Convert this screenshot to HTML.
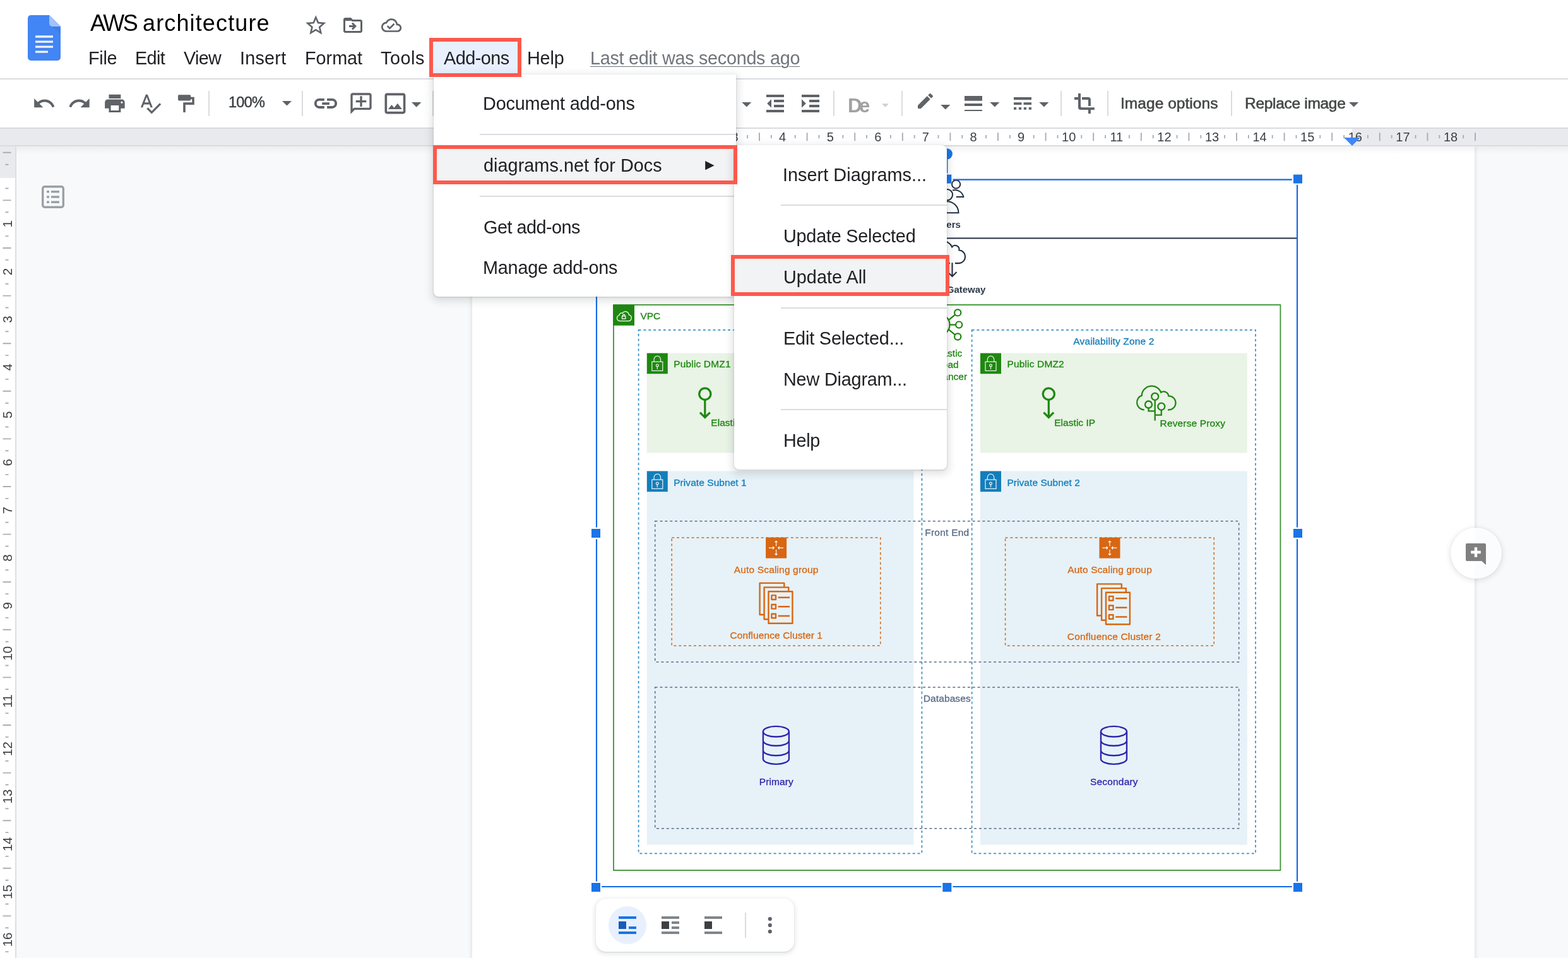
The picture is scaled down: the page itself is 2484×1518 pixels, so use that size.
<!DOCTYPE html>
<html lang="en"><head><meta charset="utf-8"><title>AWS architecture - Google Docs</title>
<style>
html,body{margin:0;padding:0}
body{width:2484px;height:1518px;position:relative;overflow:hidden;background:#f8f9fa;
font-family:"Liberation Sans",sans-serif;}
.t{position:absolute;white-space:nowrap;line-height:1;will-change:transform;}
.ic{position:absolute;display:block;will-change:transform;}
</style></head>
<body>
<!-- document canvas -->
<div style="position:absolute;left:748px;top:232px;width:1588px;height:1300px;background:#fff;box-shadow:0 0 6px 1px rgba(60,64,67,.15);"></div>
<div style="position:absolute;left:25px;top:232px;width:2459px;height:12px;background:linear-gradient(rgba(60,64,67,.06),rgba(60,64,67,0));"></div>
<svg class="ic" style="left:65.8px;top:294px" width="36" height="36" viewBox="0 0 36 36"><rect x="1.7" y="1.7" width="32.6" height="32.6" rx="3" fill="none" stroke="#9aa0a6" stroke-width="3.4"/><path d="M8 8h4v3.6H8zM15 8h13v3.6H15zM8 16.2h4v3.6H8zM15 16.2h13v3.6H15zM8 24.4h4V28H8zM15 24.4h13V28H15z" fill="#9aa0a6"/></svg>
<!-- embedded diagram -->
<svg class="ic" style="left:900px;top:270px;overflow:visible" width="1200" height="1150" viewBox="900 270 1200 1150" font-family="Liberation Sans, sans-serif">
<path d="M946 377.5H2054" stroke="#232f3e" stroke-width="2"/>
<g fill="none" stroke="#232f3e" stroke-width="2"><circle cx="1514.600" cy="292" r="6.600"/><path d="M1509 301.500a14 14 0 0 1 17.300 10.400h-11.500"/><circle cx="1500.500" cy="308.600" r="8.600"/><path d="M1482.500 337.300a18 18 0 0 1 36 0z"/></g>
<text x="1501.0" y="361.3" fill="#2d3848" stroke="#2d3848" stroke-width="0" font-size="15" text-anchor="middle" font-weight="bold">Users</text>
<g fill="none" stroke="#232f3e" stroke-width="2.1"><path d="M1480 417.100h8M1497 417.100h8M1512.900 417.100h7A10.400 10.400 0 0 0 1519.400 396.400A6.300 6.300 0 0 0 1508.200 391.400A16 16 0 0 0 1478 394A12 12 0 0 0 1480 417.100"/><path d="M1508.500 416.300v20.500M1501.500 431l7 7 7-7M1492.500 438v-21M1485.500 423.500l7-7 7 7"/></g>
<text x="1501.0" y="463.5" fill="#2d3848" stroke="#2d3848" stroke-width="0" font-size="15" text-anchor="middle" font-weight="bold">Internet Gateway</text>
<rect x="972" y="483.100" width="1056.400" height="895.900" fill="none" stroke="#3a9430" stroke-width="1.8"/>
<g transform="translate(971.2 482.9)"><rect width="33.800" height="32.900" fill="#1f8711"/><g fill="none" stroke="#fff" stroke-width="1.25"><path d="M9.800 25.700h14.500a4.900 4.900 0 0 0 .8-9.700a5.600 5.600 0 0 0-10.300-2.600a3.600 3.600 0 0 0-5 3.200a4.700 4.700 0 0 0 0 9.100z"/><rect x="14.300" y="18" width="5.400" height="4.300"/><path d="M15.400 18v-1.100a1.600 1.600 0 0 1 3.200 0v1.100"/></g></g>
<text x="1014.4" y="506.0" fill="#1f8711" stroke="#1f8711" stroke-width=".3" font-size="15.5">VPC</text>
<g fill="none" stroke="#1f8711" stroke-width="2.2"><circle cx="1487.800" cy="514.600" r="16.700"/><circle cx="1517.200" cy="495.400" r="5.100"/><circle cx="1519.200" cy="514.600" r="5.100"/><circle cx="1517.200" cy="533.500" r="5.100"/><path d="M1502.500 507.400l10.300-8.600M1504.500 514.600h9.600M1502.500 521.800l10.300 8.500"/></g>
<text x="1501.5" y="564.8" fill="#1f8711" stroke="#1f8711" stroke-width=".3" font-size="15.5" text-anchor="middle">Elastic</text>
<text x="1501.5" y="583.4" fill="#1f8711" stroke="#1f8711" stroke-width=".3" font-size="15.5" text-anchor="middle">Load</text>
<text x="1501.5" y="602.0" fill="#1f8711" stroke="#1f8711" stroke-width=".3" font-size="15.5" text-anchor="middle">Balancer</text>
<rect x="1011.6" y="522.8" width="448.8" height="829.5" fill="none" stroke="#3a90c6" stroke-width="1.75" stroke-dasharray="3.93 3.93"/>
<rect x="1539.6" y="522.8" width="449.4" height="829.5" fill="none" stroke="#3a90c6" stroke-width="1.75" stroke-dasharray="3.93 3.93"/>
<text x="1236.0" y="545.8" fill="#147eba" stroke="#147eba" stroke-width=".3" font-size="15.5" text-anchor="middle">Availability Zone 1</text>
<text x="1764.3" y="545.8" fill="#147eba" stroke="#147eba" stroke-width=".3" font-size="15.5" text-anchor="middle" textLength="128.0" lengthAdjust="spacing">Availability Zone 2</text>
<rect x="1024.8" y="559.6" width="422.8" height="157.9" fill="#e9f3e6"/>
<g transform="translate(1024.8 559.6)"><rect width="33" height="32.700" fill="#1f8711"/><g fill="none" stroke="#fff" stroke-opacity=".88" stroke-width="1.25"><rect x="8" y="13.600" width="17" height="14.300"/><path d="M11.300 13.600V9.800a5.200 5.200 0 0 1 10.400 0v3.800"/><circle cx="16.500" cy="19.400" r="1.900"/><path d="M16.500 21.300v4.400"/></g></g>
<text x="1067.3" y="582.4" fill="#1f8711" stroke="#1f8711" stroke-width=".3" font-size="15.5" textLength="90.2" lengthAdjust="spacing">Public DMZ1</text>
<rect x="1024.8" y="746.5" width="422.8" height="592.2" fill="#e6f2f8"/>
<g transform="translate(1024.8 746.5)"><rect width="33" height="32.700" fill="#147eba"/><g fill="none" stroke="#fff" stroke-opacity=".88" stroke-width="1.25"><rect x="8" y="13.600" width="17" height="14.300"/><path d="M11.300 13.600V9.800a5.200 5.200 0 0 1 10.400 0v3.800"/><circle cx="16.500" cy="19.400" r="1.900"/><path d="M16.500 21.300v4.400"/></g></g>
<text x="1067.2" y="769.7" fill="#147eba" stroke="#147eba" stroke-width=".3" font-size="15.5" textLength="115.5" lengthAdjust="spacing">Private Subnet 1</text>
<rect x="1553.0" y="559.6" width="422.8" height="157.9" fill="#e9f3e6"/>
<g transform="translate(1553.0 559.6)"><rect width="33" height="32.700" fill="#1f8711"/><g fill="none" stroke="#fff" stroke-opacity=".88" stroke-width="1.25"><rect x="8" y="13.600" width="17" height="14.300"/><path d="M11.300 13.600V9.800a5.200 5.200 0 0 1 10.400 0v3.800"/><circle cx="16.500" cy="19.400" r="1.900"/><path d="M16.500 21.300v4.400"/></g></g>
<text x="1595.5" y="582.4" fill="#1f8711" stroke="#1f8711" stroke-width=".3" font-size="15.5" textLength="90.2" lengthAdjust="spacing">Public DMZ2</text>
<rect x="1553.0" y="746.5" width="422.8" height="592.2" fill="#e6f2f8"/>
<g transform="translate(1553.0 746.5)"><rect width="33" height="32.700" fill="#147eba"/><g fill="none" stroke="#fff" stroke-opacity=".88" stroke-width="1.25"><rect x="8" y="13.600" width="17" height="14.300"/><path d="M11.300 13.600V9.800a5.200 5.200 0 0 1 10.400 0v3.800"/><circle cx="16.500" cy="19.400" r="1.900"/><path d="M16.500 21.300v4.400"/></g></g>
<text x="1595.4" y="769.7" fill="#147eba" stroke="#147eba" stroke-width=".3" font-size="15.5" textLength="115.5" lengthAdjust="spacing">Private Subnet 2</text>
<g fill="none" stroke="#1f8711" stroke-width="3.2"><circle cx="1116.8" cy="624.2" r="9.1"/><path d="M1116.8 633.3V660.7M1108.9 653.6l7.900 7.900 7.900-7.900"/></g>
<text x="1126.3" y="674.7" fill="#1f8711" stroke="#1f8711" stroke-width=".3" font-size="15.5" textLength="65.0" lengthAdjust="spacing">Elastic IP</text>
<g fill="none" stroke="#1f8711" stroke-width="3.2"><circle cx="1661.3" cy="624.2" r="9.1"/><path d="M1661.3 633.3V660.7M1653.4 653.6l7.900 7.900 7.900-7.900"/></g>
<text x="1670.2" y="674.7" fill="#1f8711" stroke="#1f8711" stroke-width=".3" font-size="15.5" textLength="65.0" lengthAdjust="spacing">Elastic IP</text>
<g transform="translate(-544.5 0)" fill="none" stroke="#1f8711" stroke-width="2.3"><path d="M1812.7 649.3A11.7 11.7 0 0 1 1808.8 626.6A15.7 15.7 0 0 1 1839.2 621.8A7.7 7.7 0 0 1 1851.2 627.4A11 11 0 1 1 1850 649.3"/><circle cx="1829.7" cy="628.3" r="5.5"/><circle cx="1819.5" cy="641" r="5.5"/><circle cx="1839.8" cy="644.1" r="5.5"/><path d="M1829.7 633.8V666.4M1819.5 646.5v4.9h10.2M1839.8 649.6v8h-10.1"/></g>
<text x="1293.1" y="676.1" fill="#1f8711" stroke="#1f8711" stroke-width=".3" font-size="15.5" textLength="103.3" lengthAdjust="spacing">Reverse Proxy</text>
<g transform="translate(0.0 0)" fill="none" stroke="#1f8711" stroke-width="2.3"><path d="M1812.7 649.3A11.7 11.7 0 0 1 1808.8 626.6A15.7 15.7 0 0 1 1839.2 621.8A7.7 7.7 0 0 1 1851.2 627.4A11 11 0 1 1 1850 649.3"/><circle cx="1829.7" cy="628.3" r="5.5"/><circle cx="1819.5" cy="641" r="5.5"/><circle cx="1839.8" cy="644.1" r="5.5"/><path d="M1829.7 633.8V666.4M1819.5 646.5v4.9h10.2M1839.8 649.6v8h-10.1"/></g>
<text x="1837.6" y="676.1" fill="#1f8711" stroke="#1f8711" stroke-width=".3" font-size="15.5" textLength="103.3" lengthAdjust="spacing">Reverse Proxy</text>
<rect x="1037.7" y="825.8" width="924.9" height="223.2" fill="none" stroke="#5a6c86" stroke-width="1.5" stroke-dasharray="3.93 3.93"/>
<rect x="1037.7" y="1089.0" width="924.9" height="223.7" fill="none" stroke="#5a6c86" stroke-width="1.5" stroke-dasharray="3.93 3.93"/>
<rect x="1463" y="836" width="74" height="19" fill="#fff"/>
<text x="1500.2" y="848.7" fill="#5a6c86" stroke="#5a6c86" stroke-width=".3" font-size="15.5" text-anchor="middle" textLength="70.0" lengthAdjust="spacing">Front End</text>
<rect x="1461" y="1099" width="78" height="19" fill="#fff"/>
<text x="1500.2" y="1112.4" fill="#5a6c86" stroke="#5a6c86" stroke-width=".3" font-size="15.5" text-anchor="middle" textLength="75.0" lengthAdjust="spacing">Databases</text>
<rect x="1064.2" y="851.9" width="330.6" height="171.3" fill="none" stroke="#d86613" stroke-width="1.5" stroke-dasharray="3.93 3.93"/>
<g transform="translate(1213.1 851.6)"><rect width="33" height="33" fill="#d86613"/><g fill="none" stroke="#fff" stroke-width="1.1"><path d="M16.5 14V5.6M14.3 7.8l2.2-2.2 2.2 2.2M16.5 19.5v8.4M14.3 25.7l2.2 2.2 2.2-2.2M4.9 16.5h8.4M11.1 14.3l2.2 2.2-2.2 2.2M27.9 16.5h-8.4M21.7 14.3l-2.2 2.2 2.2 2.2"/></g></g>
<text x="1229.6" y="908.4" fill="#d86613" stroke="#d86613" stroke-width=".3" font-size="15.5" text-anchor="middle" textLength="133.5" lengthAdjust="spacing">Auto Scaling group</text>
<rect x="1592.6" y="851.9" width="330.6" height="171.3" fill="none" stroke="#d86613" stroke-width="1.5" stroke-dasharray="3.93 3.93"/>
<g transform="translate(1741.5 851.6)"><rect width="33" height="33" fill="#d86613"/><g fill="none" stroke="#fff" stroke-width="1.1"><path d="M16.5 14V5.6M14.3 7.8l2.2-2.2 2.2 2.2M16.5 19.5v8.4M14.3 25.7l2.2 2.2 2.2-2.2M4.9 16.5h8.4M11.1 14.3l2.2 2.2-2.2 2.2M27.9 16.5h-8.4M21.7 14.3l-2.2 2.2 2.2 2.2"/></g></g>
<text x="1758.0" y="908.4" fill="#d86613" stroke="#d86613" stroke-width=".3" font-size="15.5" text-anchor="middle" textLength="133.5" lengthAdjust="spacing">Auto Scaling group</text>
<g transform="translate(1202.7 923.0)" fill="none" stroke="#d86613" stroke-width="2.4" stroke-linejoin="round"><path d="M39.6 6.7V0.9H0.9V51H7M46.6 13.4V7.6H7.9V58.2H13.9"/><rect x="14.8" y="14.3" width="37.9" height="50.5"/><path d="M19.7 20.4h6.6v6.6h-6.6zM19.7 35h6.6v6.6h-6.6zM19.7 49.7h6.6v6.6h-6.6zM30 23.7h18.3M30 38.3h18.3M30 53h18.3"/></g>
<text x="1229.7" y="1012.3" fill="#d86613" stroke="#d86613" stroke-width=".3" font-size="15.5" text-anchor="middle" textLength="146.5" lengthAdjust="spacing">Confluence Cluster 1</text>
<g transform="translate(1737.2 924.5)" fill="none" stroke="#d86613" stroke-width="2.4" stroke-linejoin="round"><path d="M39.6 6.7V0.9H0.9V51H7M46.6 13.4V7.6H7.9V58.2H13.9"/><rect x="14.8" y="14.3" width="37.9" height="50.5"/><path d="M19.7 20.4h6.6v6.6h-6.6zM19.7 35h6.6v6.6h-6.6zM19.7 49.7h6.6v6.6h-6.6zM30 23.7h18.3M30 38.3h18.3M30 53h18.3"/></g>
<text x="1764.8" y="1013.7" fill="#d86613" stroke="#d86613" stroke-width=".3" font-size="15.5" text-anchor="middle" textLength="148.0" lengthAdjust="spacing">Confluence Cluster 2</text>
<g transform="translate(1207.8 1149.8)" fill="none" stroke="#2e27ad" stroke-width="2.4"><ellipse cx="21.6" cy="9.4" rx="20.5" ry="8.3"/><path d="M1.1 9.4V52.8a20.5 8.3 0 0 0 41 0V9.4M1.1 23.7a20.5 8.3 0 0 0 41 0M1.1 39.2a20.5 8.3 0 0 0 41 0"/></g>
<text x="1229.8" y="1244.1" fill="#2e27ad" stroke="#2e27ad" stroke-width=".3" font-size="15.5" text-anchor="middle" textLength="54.0" lengthAdjust="spacing">Primary</text>
<g transform="translate(1742.9 1149.8)" fill="none" stroke="#2e27ad" stroke-width="2.4"><ellipse cx="21.6" cy="9.4" rx="20.5" ry="8.3"/><path d="M1.1 9.4V52.8a20.5 8.3 0 0 0 41 0V9.4M1.1 23.7a20.5 8.3 0 0 0 41 0M1.1 39.2a20.5 8.3 0 0 0 41 0"/></g>
<text x="1764.8" y="1244.1" fill="#2e27ad" stroke="#2e27ad" stroke-width=".3" font-size="15.5" text-anchor="middle" textLength="75.5" lengthAdjust="spacing">Secondary</text>
</svg>
<svg class="ic" style="left:900px;top:220px;overflow:visible" width="1200" height="1200" viewBox="900 220 1200 1200">
<path d="M953.2 284.6H1491.1M1509.5 284.6H2046.8M953.2 1405.0H1491.1M1509.5 1405.0H2046.8M945.0 292.8V835.8M945.0 854.2V1396.8M2055.0 292.8V835.8M2055.0 854.2V1396.8" fill="none" stroke="#1268e6" stroke-width="2.1"/>
<path d="M1500.3 244V274.500" stroke="#1268e6" stroke-width="2.1"/>
<circle cx="1500.3" cy="243.8" r="8.6" fill="#1a73e8"/>
<rect x="937.0" y="276.6" width="14" height="14" fill="#1a73e8"/>
<rect x="937.0" y="838.0" width="14" height="14" fill="#1a73e8"/>
<rect x="937.0" y="1399.0" width="14" height="14" fill="#1a73e8"/>
<rect x="1493.3" y="276.6" width="14" height="14" fill="#1a73e8"/>
<rect x="1493.3" y="1399.0" width="14" height="14" fill="#1a73e8"/>
<rect x="2049.0" y="276.6" width="14" height="14" fill="#1a73e8"/>
<rect x="2049.0" y="838.0" width="14" height="14" fill="#1a73e8"/>
<rect x="2049.0" y="1399.0" width="14" height="14" fill="#1a73e8"/>
</svg>
<!-- rulers -->
<div style="position:absolute;left:0px;top:203px;width:2484px;height:28px;background:#e8eaed;"></div>
<div style="position:absolute;left:940px;top:203px;width:1202px;height:28px;background:#fff;"></div>
<div style="position:absolute;left:0px;top:230px;width:2484px;height:2px;background:#dadce0;"></div>
<svg class="ic" style="left:0;top:203px" width="2484" height="28" viewBox="0 203 2484 28"><path d="M749.4 210.2v13M768.3 214v5.2M806.1 214v5.2M825.0 210.2v13M843.9 214v5.2M881.7 214v5.2M900.6 210.2v13M919.5 214v5.2M957.3 214v5.2M976.2 210.2v13M995.1 214v5.2M1032.9 214v5.2M1051.8 210.2v13M1070.7 214v5.2M1108.5 214v5.2M1127.4 210.2v13M1146.3 214v5.2M1184.1 214v5.2M1203.0 210.2v13M1221.9 214v5.2M1259.7 214v5.2M1278.6 210.2v13M1297.5 214v5.2M1335.3 214v5.2M1354.2 210.2v13M1373.1 214v5.2M1410.9 214v5.2M1429.8 210.2v13M1448.7 214v5.2M1486.5 214v5.2M1505.4 210.2v13M1524.3 214v5.2M1562.1 214v5.2M1581.0 210.2v13M1599.9 214v5.2M1637.7 214v5.2M1656.6 210.2v13M1675.5 214v5.2M1713.3 214v5.2M1732.2 210.2v13M1751.1 214v5.2M1788.9 214v5.2M1807.8 210.2v13M1826.7 214v5.2M1864.5 214v5.2M1883.4 210.2v13M1902.3 214v5.2M1940.1 214v5.2M1959.0 210.2v13M1977.9 214v5.2M2015.7 214v5.2M2034.6 210.2v13M2053.5 214v5.2M2091.3 214v5.2M2110.2 210.2v13M2129.1 214v5.2M2166.9 214v5.2M2185.8 210.2v13M2204.7 214v5.2M2242.5 214v5.2M2261.4 210.2v13M2280.3 214v5.2M2318.1 214v5.2M2337.0 210.2v13" stroke="#aaaeb3" stroke-width="1.9" fill="none"/><text x="1012.8" y="224.2" font-size="20" fill="#3c4043" text-anchor="middle">1</text><text x="1088.4" y="224.2" font-size="20" fill="#3c4043" text-anchor="middle">2</text><text x="1164.0" y="224.2" font-size="20" fill="#3c4043" text-anchor="middle">3</text><text x="1239.6" y="224.2" font-size="20" fill="#3c4043" text-anchor="middle">4</text><text x="1315.2" y="224.2" font-size="20" fill="#3c4043" text-anchor="middle">5</text><text x="1390.8" y="224.2" font-size="20" fill="#3c4043" text-anchor="middle">6</text><text x="1466.4" y="224.2" font-size="20" fill="#3c4043" text-anchor="middle">7</text><text x="1542.0" y="224.2" font-size="20" fill="#3c4043" text-anchor="middle">8</text><text x="1617.6" y="224.2" font-size="20" fill="#3c4043" text-anchor="middle">9</text><text x="1693.2" y="224.2" font-size="20" fill="#3c4043" text-anchor="middle">10</text><text x="1768.8" y="224.2" font-size="20" fill="#3c4043" text-anchor="middle">11</text><text x="1844.4" y="224.2" font-size="20" fill="#3c4043" text-anchor="middle">12</text><text x="1920.0" y="224.2" font-size="20" fill="#3c4043" text-anchor="middle">13</text><text x="1995.6" y="224.2" font-size="20" fill="#3c4043" text-anchor="middle">14</text><text x="2071.2" y="224.2" font-size="20" fill="#3c4043" text-anchor="middle">15</text><text x="2146.8" y="224.2" font-size="20" fill="#3c4043" text-anchor="middle">16</text><text x="2222.4" y="224.2" font-size="20" fill="#3c4043" text-anchor="middle">17</text><text x="2298.0" y="224.2" font-size="20" fill="#3c4043" text-anchor="middle">18</text></svg>
<svg class="ic" style="left:2129px;top:218px" width="26" height="13" viewBox="0 0 26 13"><path d="M0 0h26L13 13z" fill="#4285f4"/></svg>
<div style="position:absolute;left:0px;top:232px;width:25px;height:1290px;background:#fff;"></div>
<div style="position:absolute;left:0px;top:232px;width:25px;height:49.5px;background:#e8eaed;"></div>
<div style="position:absolute;left:24px;top:232px;width:2px;height:1290px;background:#dddfe3;"></div>
<svg class="ic" style="left:0;top:232px" width="25" height="1286" viewBox="0 232 25 1286"><path d="M4.5 241.8h13M8.5 260.7h5M8.5 298.5h5M4.5 317.4h13M8.5 336.3h5M8.5 374.1h5M4.5 393.0h13M8.5 411.9h5M8.5 449.7h5M4.5 468.6h13M8.5 487.5h5M8.5 525.3h5M4.5 544.2h13M8.5 563.1h5M8.5 600.9h5M4.5 619.8h13M8.5 638.7h5M8.5 676.5h5M4.5 695.4h13M8.5 714.3h5M8.5 752.1h5M4.5 771.0h13M8.5 789.9h5M8.5 827.7h5M4.5 846.6h13M8.5 865.5h5M8.5 903.3h5M4.5 922.2h13M8.5 941.1h5M8.5 978.9h5M4.5 997.8h13M8.5 1016.7h5M8.5 1054.5h5M4.5 1073.4h13M8.5 1092.3h5M8.5 1130.1h5M4.5 1149.0h13M8.5 1167.9h5M8.5 1205.7h5M4.5 1224.6h13M8.5 1243.5h5M8.5 1281.3h5M4.5 1300.2h13M8.5 1319.1h5M8.5 1356.9h5M4.5 1375.8h13M8.5 1394.7h5M8.5 1432.5h5M4.5 1451.4h13M8.5 1470.3h5M8.5 1508.1h5M4.5 1527.0h13" stroke="#aaaeb3" stroke-width="1.9" fill="none"/><text transform="translate(19.3 354.9) rotate(-90)" font-size="20.5" fill="#3c4043" text-anchor="middle">1</text><text transform="translate(19.3 430.5) rotate(-90)" font-size="20.5" fill="#3c4043" text-anchor="middle">2</text><text transform="translate(19.3 506.1) rotate(-90)" font-size="20.5" fill="#3c4043" text-anchor="middle">3</text><text transform="translate(19.3 581.7) rotate(-90)" font-size="20.5" fill="#3c4043" text-anchor="middle">4</text><text transform="translate(19.3 657.3) rotate(-90)" font-size="20.5" fill="#3c4043" text-anchor="middle">5</text><text transform="translate(19.3 732.9) rotate(-90)" font-size="20.5" fill="#3c4043" text-anchor="middle">6</text><text transform="translate(19.3 808.5) rotate(-90)" font-size="20.5" fill="#3c4043" text-anchor="middle">7</text><text transform="translate(19.3 884.1) rotate(-90)" font-size="20.5" fill="#3c4043" text-anchor="middle">8</text><text transform="translate(19.3 959.7) rotate(-90)" font-size="20.5" fill="#3c4043" text-anchor="middle">9</text><text transform="translate(19.3 1035.3) rotate(-90)" font-size="20.5" fill="#3c4043" text-anchor="middle">10</text><text transform="translate(19.3 1110.9) rotate(-90)" font-size="20.5" fill="#3c4043" text-anchor="middle">11</text><text transform="translate(19.3 1186.5) rotate(-90)" font-size="20.5" fill="#3c4043" text-anchor="middle">12</text><text transform="translate(19.3 1262.1) rotate(-90)" font-size="20.5" fill="#3c4043" text-anchor="middle">13</text><text transform="translate(19.3 1337.7) rotate(-90)" font-size="20.5" fill="#3c4043" text-anchor="middle">14</text><text transform="translate(19.3 1413.3) rotate(-90)" font-size="20.5" fill="#3c4043" text-anchor="middle">15</text><text transform="translate(19.3 1488.9) rotate(-90)" font-size="20.5" fill="#3c4043" text-anchor="middle">16</text></svg>
<!-- header and toolbar -->
<div style="position:absolute;left:0px;top:0px;width:2484px;height:124px;background:#fff;"></div>
<div style="position:absolute;left:0px;top:124px;width:2484px;height:2px;background:#dadce0;"></div>
<div style="position:absolute;left:0px;top:126px;width:2484px;height:76px;background:#fff;"></div>
<div style="position:absolute;left:0px;top:202px;width:2484px;height:2px;background:#d8dadf;"></div>
<svg class="ic" style="left:44px;top:24px" width="52" height="72" viewBox="0 0 52 72"><path d="M5 0h29l18 18v49a5 5 0 0 1-5 5H5a5 5 0 0 1-5-5V5a5 5 0 0 1 5-5z" fill="#4285f4"/><path d="M34 0l18 18v12L36 16z" fill="#3b78e7" opacity=".55"/><path d="M34 0l18 18H39a5 5 0 0 1-5-5z" fill="#a1c2fa"/><path d="M12 32.3h28v3.4H12zM12 40.4h28v3.4H12zM12 48.4h28v3.4H12zM12 56.4h20v3.4H12z" fill="#f1f3f4"/></svg>
<span id="t1" class="t" style="left:142.60px;top:19.33px;font-size:36px;color:#000;letter-spacing:-2.391px;">AWS</span>
<span id="t2" class="t" style="left:225.86px;top:19.33px;font-size:36px;color:#000;letter-spacing:1.137px;">architecture</span>
<svg class="ic" style="left:480.6px;top:21px" width="38.6" height="38.6" viewBox="0 0 24 24"><g fill="#5f6368"><path d="M22 9.24l-7.19-.62L12 2 9.19 8.63 2 9.24l5.46 4.73L5.82 21 12 17.27 18.18 21l-1.63-7.03L22 9.24zM12 15.4l-3.76 2.27 1-4.28-3.32-2.88 4.38-.38L12 6.1l1.71 4.04 4.38.38-3.32 2.88 1 4.28L12 15.4z"/></g></svg>
<svg class="ic" style="left:541px;top:22.2px" width="36" height="36" viewBox="0 0 24 24"><g fill="#5f6368"><path d="M20 6h-8l-2-2H4c-1.1 0-2 .9-2 2v12c0 1.1.9 2 2 2h16c1.1 0 2-.9 2-2V8c0-1.1-.9-2-2-2zm0 12H4V6h5.17l2 2H20v10zm-7.84-4H8v-2h4.16l-1.59-1.59L11.99 9 16 13.01 11.99 17l-1.41-1.41L12.16 14z"/><path d="M3 5h6.600l2 2.300H3z"/></g></svg>
<svg class="ic" style="left:603.7px;top:24.4px" width="32.2" height="32.2" viewBox="0 0 24 24"><g fill="#5f6368"><path d="M19.35 10.04C18.67 6.59 15.64 4 12 4 9.11 4 6.6 5.64 5.35 8.04 2.34 8.36 0 10.91 0 14c0 3.31 2.69 6 6 6h13c2.76 0 5-2.24 5-5 0-2.64-2.05-4.78-4.65-4.96zM19 18H6c-2.21 0-4-1.79-4-4 0-2.05 1.53-3.76 3.56-3.97l1.07-.11.5-.95C8.08 7.14 9.94 6 12 6c2.62 0 4.88 1.86 5.39 4.43l.3 1.5 1.53.11c1.56.1 2.78 1.41 2.78 2.96 0 1.65-1.35 3-3 3zm-9-3.82l-2.09-2.09L6.5 13.5 10 17l6.01-6.01-1.41-1.41z"/></g></svg>
<span id="t3" class="t" style="left:139.60px;top:78.12px;font-size:28.8px;color:#202124;letter-spacing:-0.258px;">File</span>
<span id="t4" class="t" style="left:213.50px;top:78.12px;font-size:28.8px;color:#202124;letter-spacing:-0.635px;">Edit</span>
<span id="t5" class="t" style="left:291.06px;top:78.12px;font-size:28.8px;color:#202124;letter-spacing:-0.681px;">View</span>
<span id="t6" class="t" style="left:380.21px;top:78.12px;font-size:28.8px;color:#202124;letter-spacing:0.236px;">Insert</span>
<span id="t7" class="t" style="left:482.50px;top:78.12px;font-size:28.8px;color:#202124;letter-spacing:-0.016px;">Format</span>
<span id="t8" class="t" style="left:603.02px;top:78.12px;font-size:28.8px;color:#202124;letter-spacing:0.539px;">Tools</span>
<div style="position:absolute;left:684px;top:64px;width:138px;height:58px;background:#e8f0fe;"></div>
<span id="t9" class="t" style="left:702.60px;top:78.12px;font-size:28.8px;color:#202124;letter-spacing:-0.510px;">Add-ons</span>
<span id="t10" class="t" style="left:834.90px;top:78.12px;font-size:28.8px;color:#202124;letter-spacing:-0.181px;">Help</span>
<span id="t11" class="t" style="left:935.30px;top:78.12px;font-size:28.8px;color:#70757a;letter-spacing:-0.291px;text-decoration:underline;text-decoration-thickness:1.4px;text-underline-offset:2.6px;">Last edit was seconds ago</span>
<svg class="ic" style="left:50.7px;top:144.7px" width="37.8" height="37.8" viewBox="0 0 24 24"><g fill="#5f6368"><path d="M12.5 8c-2.65 0-5.05.99-6.9 2.6L2 7v9h9l-3.62-3.62c1.39-1.16 3.16-1.88 5.12-1.88 3.54 0 6.55 2.31 7.6 5.5l2.37-.78C21.08 11.03 17.15 8 12.5 8z"/></g></svg>
<svg class="ic" style="left:107.1px;top:144.7px" width="37.8" height="37.8" viewBox="0 0 24 24"><g fill="#5f6368"><path d="M18.4 10.6C16.55 8.99 14.15 8 11.5 8c-4.65 0-8.58 3.03-9.96 7.22L3.9 16c1.05-3.19 4.05-5.5 7.6-5.5 1.95 0 3.73.72 5.12 1.88L13 16h9V7l-3.6 3.6z"/></g></svg>
<svg class="ic" style="left:163.1px;top:144.7px" width="37.8" height="37.8" viewBox="0 0 24 24"><g fill="#5f6368"><path d="M19 8H5c-1.66 0-3 1.34-3 3v6h4v4h12v-4h4v-6c0-1.66-1.34-3-3-3zm-3 11H8v-5h8v5zm3-7c-.55 0-1-.45-1-1s.45-1 1-1 1 .45 1 1-.45 1-1 1zm-1-9H6v4h12V3z"/></g></svg>
<svg class="ic" style="left:219.1px;top:145.3px" width="37.8" height="37.8" viewBox="0 0 24 24"><g fill="#5f6368"><path d="M12.45 16h2.09L9.43 3H7.57L2.46 16h2.09l1.12-3h5.64l1.14 3zm-6.02-5L8.5 5.48 10.57 11H6.43zm15.16.59l-8.09 8.09L9.83 16l-1.41 1.41 5.09 5.09L23 13l-1.41-1.41z"/></g></svg>
<svg class="ic" style="left:280px;top:148px" width="30" height="32" viewBox="280 148 30 32"><path d="M282 151.800a1.600 1.600 0 0 1 1.600-1.600h17a1.600 1.600 0 0 1 1.600 1.600v1.950h5.600v12.150h-14v12h-3.600v-15.600h14v-5h-2v.5a1.600 1.600 0 0 1-1.600 1.600h-17a1.600 1.600 0 0 1-1.600-1.600z" fill="#5f6368"/></svg>
<div style="position:absolute;left:330px;top:144px;width:2px;height:40px;background:#dadce0;"></div>
<span id="t12" class="t" style="left:362.24px;top:151.21px;font-size:23.5px;color:#3c4043;font-weight:500;letter-spacing:-0.751px;-webkit-text-stroke:0.45px #3c4043;">100%</span>
<svg class="ic" style="left:446.6px;top:160px" width="15" height="7.6" viewBox="0 0 10 5"><path d="M0 0h10L5 5z" fill="#5f6368"/></svg>
<div style="position:absolute;left:478.3px;top:144px;width:2px;height:40px;background:#dadce0;"></div>
<svg class="ic" style="left:496px;top:154px" width="40" height="20" viewBox="496 154 40 20"><path d="M513.800 155.900h-8a8 8 0 0 0 0 16h8v-3.900h-8a4.100 4.100 0 0 1 0-8.200h8zM518.100 155.900h8a8 8 0 0 1 0 16h-8v-3.900h8a4.100 4.100 0 0 0 0-8.200h-8zM510.200 162.200h11.700v3.700h-11.700z" fill="#5f6368"/></svg>
<svg class="ic" style="left:551.85px;top:143.85px" width="40" height="40" viewBox="0 0 24 24"><g fill="#5f6368" transform="translate(24,0) scale(-1,1)"><path d="M22 4c0-1.1-.9-2-2-2H4c-1.1 0-2 .9-2 2v12c0 1.1.9 2 2 2h14l4 4V4zm-2 13.17L18.83 16H4V4h16v13.17zM13 5h-2v4H7v2h4v4h2v-4h4V9h-4z"/></g></svg>
<svg class="ic" style="left:604.1px;top:141.95px" width="43.9" height="43.9" viewBox="0 0 24 24"><g fill="#5f6368"><path d="M19 5v14H5V5h14m0-2H5c-1.1 0-2 .9-2 2v14c0 1.1.9 2 2 2h14c1.1 0 2-.9 2-2V5c0-1.1-.9-2-2-2zm-4.86 8.86l-3 3.87L9 13.14 6 17h12l-3.86-5.14z"/></g></svg>
<svg class="ic" style="left:652.2px;top:162px" width="15.4" height="7.9" viewBox="0 0 10 5"><path d="M0 0h10L5 5z" fill="#5f6368"/></svg>
<div style="position:absolute;left:685px;top:144px;width:2px;height:40px;background:#dadce0;"></div>
<svg class="ic" style="left:1174.5px;top:162px" width="15.5" height="7.6" viewBox="0 0 10 5"><path d="M0 0h10L5 5z" fill="#5f6368"/></svg>
<svg class="ic" style="left:1212px;top:148px" width="88" height="32" viewBox="1212 148 88 32"><path d="M1214 150h28v4h-28zM1226 158h16v4h-16zM1226 166h16v4h-16zM1214 174h28v4h-28zM1222 157.300v13.500l-6.800-6.800zM1270 150h28v4h-28zM1282 158h16v4h-16zM1282 166h16v4h-16zM1270 174h28v4h-28zM1270 157.300l6.900 6.700-6.900 6.800z" fill="#5f6368"/></svg>
<div style="position:absolute;left:1319.7px;top:144px;width:2px;height:40px;background:#dadce0;"></div>
<span id="t13" class="t" style="left:1342.95px;top:152.24px;font-size:31.5px;color:#a2a2a2;font-weight:700;letter-spacing:-5.087px;">De</span>
<svg class="ic" style="left:1397.4px;top:164px" width="11" height="6" viewBox="0 0 10 5"><path d="M0 0h10L5 5z" fill="#cfcfcf"/></svg>
<div style="position:absolute;left:1427.7px;top:144px;width:2px;height:40px;background:#dadce0;"></div>
<svg class="ic" style="left:1450.1px;top:144px" width="32" height="32" viewBox="0 0 24 24"><g fill="#5f6368"><path d="M3 17.25V21h3.75L17.81 9.94l-3.75-3.75L3 17.25zM20.71 7.04c.39-.39.39-1.02 0-1.41l-2.34-2.34c-.39-.39-1.02-.39-1.41 0l-1.83 1.83 3.75 3.75 1.83-1.83z"/></g></svg>
<svg class="ic" style="left:1490px;top:166.2px" width="15.6" height="7.6" viewBox="0 0 10 5"><path d="M0 0h10L5 5z" fill="#5f6368"/></svg>
<svg class="ic" style="left:1528px;top:152px" width="28" height="25" viewBox="0 0 28 25"><path d="M0 0h28v7.800H0zM0 12.100h28v3.800H0zM0 21.900h28v2H0z" fill="#5f6368"/></svg>
<svg class="ic" style="left:1568px;top:162px" width="15.7" height="7.6" viewBox="0 0 10 5"><path d="M0 0h10L5 5z" fill="#5f6368"/></svg>
<svg class="ic" style="left:1606px;top:154px" width="28" height="20" viewBox="0 0 28 20"><path d="M0 0h28v4.3H0zM0 8.2h12.5v3.8H0zM15.5 8.2H28v3.8H15.5zM0 16h4.2v3.8H0zM7.9 16h4.2v3.8H7.9zM15.8 16h4.2v3.8h-4.2zM23.8 16H28v3.8h-4.2z" fill="#5f6368"/></svg>
<svg class="ic" style="left:1646px;top:162px" width="15.7" height="7.6" viewBox="0 0 10 5"><path d="M0 0h10L5 5z" fill="#5f6368"/></svg>
<div style="position:absolute;left:1680px;top:144px;width:2px;height:40px;background:#dadce0;"></div>
<svg class="ic" style="left:1700px;top:146px" width="36" height="36" viewBox="1700 146 36 36"><path d="M1708 148h4v20.300a2 2 0 0 0 2 2h19.900v3.700h-21.900a4 4 0 0 1-4-4zM1702 154.100h6v3.900h-6zM1714 154.100h9.900a4 4 0 0 1 4 4v9.800h-3.900v-9.900h-10zM1724 174h3.900v5.900h-3.900z" fill="#5f6368"/></svg>
<div style="position:absolute;left:1754px;top:144px;width:2px;height:40px;background:#dadce0;"></div>
<span id="t14" class="t" style="left:1774.80px;top:152.16px;font-size:24.5px;color:#444746;letter-spacing:0.045px;-webkit-text-stroke:0.6px #444746;">Image options</span>
<div style="position:absolute;left:1950px;top:144px;width:2px;height:40px;background:#dadce0;"></div>
<span id="t15" class="t" style="left:1972.34px;top:152.16px;font-size:24.5px;color:#444746;letter-spacing:-0.304px;-webkit-text-stroke:0.6px #444746;">Replace image</span>
<svg class="ic" style="left:2136.5px;top:162px" width="15.2" height="7.6" viewBox="0 0 10 5"><path d="M0 0h10L5 5z" fill="#5f6368"/></svg>
<!-- floating controls -->
<div style="position:absolute;left:2297.5px;top:836px;width:81px;height:81px;border-radius:50%;background:linear-gradient(90deg,#fff 47.5%,#fbfcfd 47.5%);box-shadow:0 2px 8px 1px rgba(60,64,67,.14),0 0 0 1px rgba(60,64,67,.06);"></div>
<svg class="ic" style="left:2322px;top:860.7px" width="32" height="34.3" viewBox="0 0 32 34.3"><path d="M2 0h28a2 2 0 0 1 2 2v32.3L25.3 28H2a2 2 0 0 1-2-2V2a2 2 0 0 1 2-2z" fill="#808080"/><path d="M13.8 6.2h4.4v5.6h5.6v4.4h-5.6v5.6h-4.4v-5.6H8.2v-4.4h5.6z" fill="#fff"/></svg>
<div style="position:absolute;left:944px;top:1424px;width:314px;height:84px;border-radius:16px;background:#fff;box-shadow:0 2px 6px 2px rgba(60,64,67,.12),0 1px 2px rgba(60,64,67,.12);"></div>
<div style="position:absolute;left:964px;top:1436px;width:60px;height:60px;border-radius:50%;background:#e8f0fe;"></div>
<svg class="ic" style="left:944px;top:1424px" width="314" height="84" viewBox="944 1424 314 84"><path d="M980 1452h28v4h-28zM980 1476h28v4h-28zM996 1468h12v4h-12z" fill="#1a73e8"/><path d="M980 1460h12v12h-12z" fill="#185abc"/><path d="M1048 1452h28v4h-28zM1048 1476h28v4h-28zM1064 1460h12v4h-12zM1064 1468h12v4h-12z" fill="#80868b"/><path d="M1048 1460h12v12h-12z" fill="#3c4043"/><path d="M1116 1452h28v4h-28zM1116 1476h28v4h-28z" fill="#80868b"/><path d="M1116 1460h12v12h-12z" fill="#3c4043"/><path d="M1180 1446h2v40h-2z" fill="#dadce0"/><circle cx="1219.8" cy="1456" r="3.1" fill="#5f6368"/><circle cx="1219.8" cy="1466" r="3.1" fill="#5f6368"/><circle cx="1219.8" cy="1476" r="3.1" fill="#5f6368"/></svg>
<!-- menus -->
<div style="position:absolute;left:687px;top:118px;width:479px;height:352px;background:#fff;border-radius:0 0 8px 8px;box-shadow:0 4px 12px 4px rgba(60,64,67,.14),0 1px 3px rgba(60,64,67,.2);"></div>
<span id="t16" class="t" style="left:764.80px;top:150.42px;font-size:28.8px;color:#202124;letter-spacing:-0.167px;">Document add-ons</span>
<div style="position:absolute;left:760px;top:212px;width:406px;height:2px;background:#dadce0;"></div>
<div style="position:absolute;left:687px;top:232px;width:479px;height:58px;background:#f1f3f4;"></div>
<span id="t17" class="t" style="left:765.65px;top:247.52px;font-size:28.8px;color:#202124;letter-spacing:0.049px;">diagrams.net for Docs</span>
<svg class="ic" style="left:1117.3px;top:254.5px" width="14.8" height="14.4" viewBox="0 0 10 10"><path d="M0 0l10 5L0 10z" fill="#202124"/></svg>
<div style="position:absolute;left:760px;top:310px;width:406px;height:2px;background:#dadce0;"></div>
<span id="t18" class="t" style="left:765.56px;top:346.02px;font-size:28.8px;color:#202124;letter-spacing:-0.504px;">Get add-ons</span>
<span id="t19" class="t" style="left:764.80px;top:409.92px;font-size:28.8px;color:#202124;letter-spacing:-0.210px;">Manage add-ons</span>
<div style="position:absolute;left:1163px;top:230px;width:337px;height:514px;background:#fff;border-radius:8px;box-shadow:0 4px 12px 4px rgba(60,64,67,.14),0 1px 3px rgba(60,64,67,.2);"></div>
<span id="t20" class="t" style="left:1240.41px;top:262.52px;font-size:28.8px;color:#202124;letter-spacing:0.048px;">Insert Diagrams...</span>
<div style="position:absolute;left:1237px;top:324px;width:263px;height:2px;background:#dadce0;"></div>
<span id="t21" class="t" style="left:1240.84px;top:360.22px;font-size:28.8px;color:#202124;letter-spacing:-0.233px;">Update Selected</span>
<div style="position:absolute;left:1163px;top:406px;width:337px;height:60px;background:#f1f3f4;"></div>
<span id="t22" class="t" style="left:1240.84px;top:424.72px;font-size:28.8px;color:#202124;letter-spacing:0.024px;">Update All</span>
<div style="position:absolute;left:1237px;top:486.5px;width:263px;height:2px;background:#dadce0;"></div>
<span id="t23" class="t" style="left:1240.70px;top:522.42px;font-size:28.8px;color:#202124;letter-spacing:-0.155px;">Edit Selected...</span>
<span id="t24" class="t" style="left:1240.70px;top:587.02px;font-size:28.8px;color:#202124;letter-spacing:-0.182px;">New Diagram...</span>
<div style="position:absolute;left:1237px;top:648px;width:263px;height:2px;background:#dadce0;"></div>
<span id="t25" class="t" style="left:1240.70px;top:683.82px;font-size:28.8px;color:#202124;letter-spacing:-0.279px;">Help</span>
<div style="position:absolute;left:680px;top:60px;width:146px;height:62px;border:6px solid #fd594c;box-sizing:border-box;"></div>
<div style="position:absolute;left:685.5px;top:229.5px;width:482px;height:62.5px;border:6px solid #fd594c;box-sizing:border-box;"></div>
<div style="position:absolute;left:1157.5px;top:403.5px;width:346.5px;height:65px;border:6.5px solid #fd594c;box-sizing:border-box;"></div>
</body></html>
